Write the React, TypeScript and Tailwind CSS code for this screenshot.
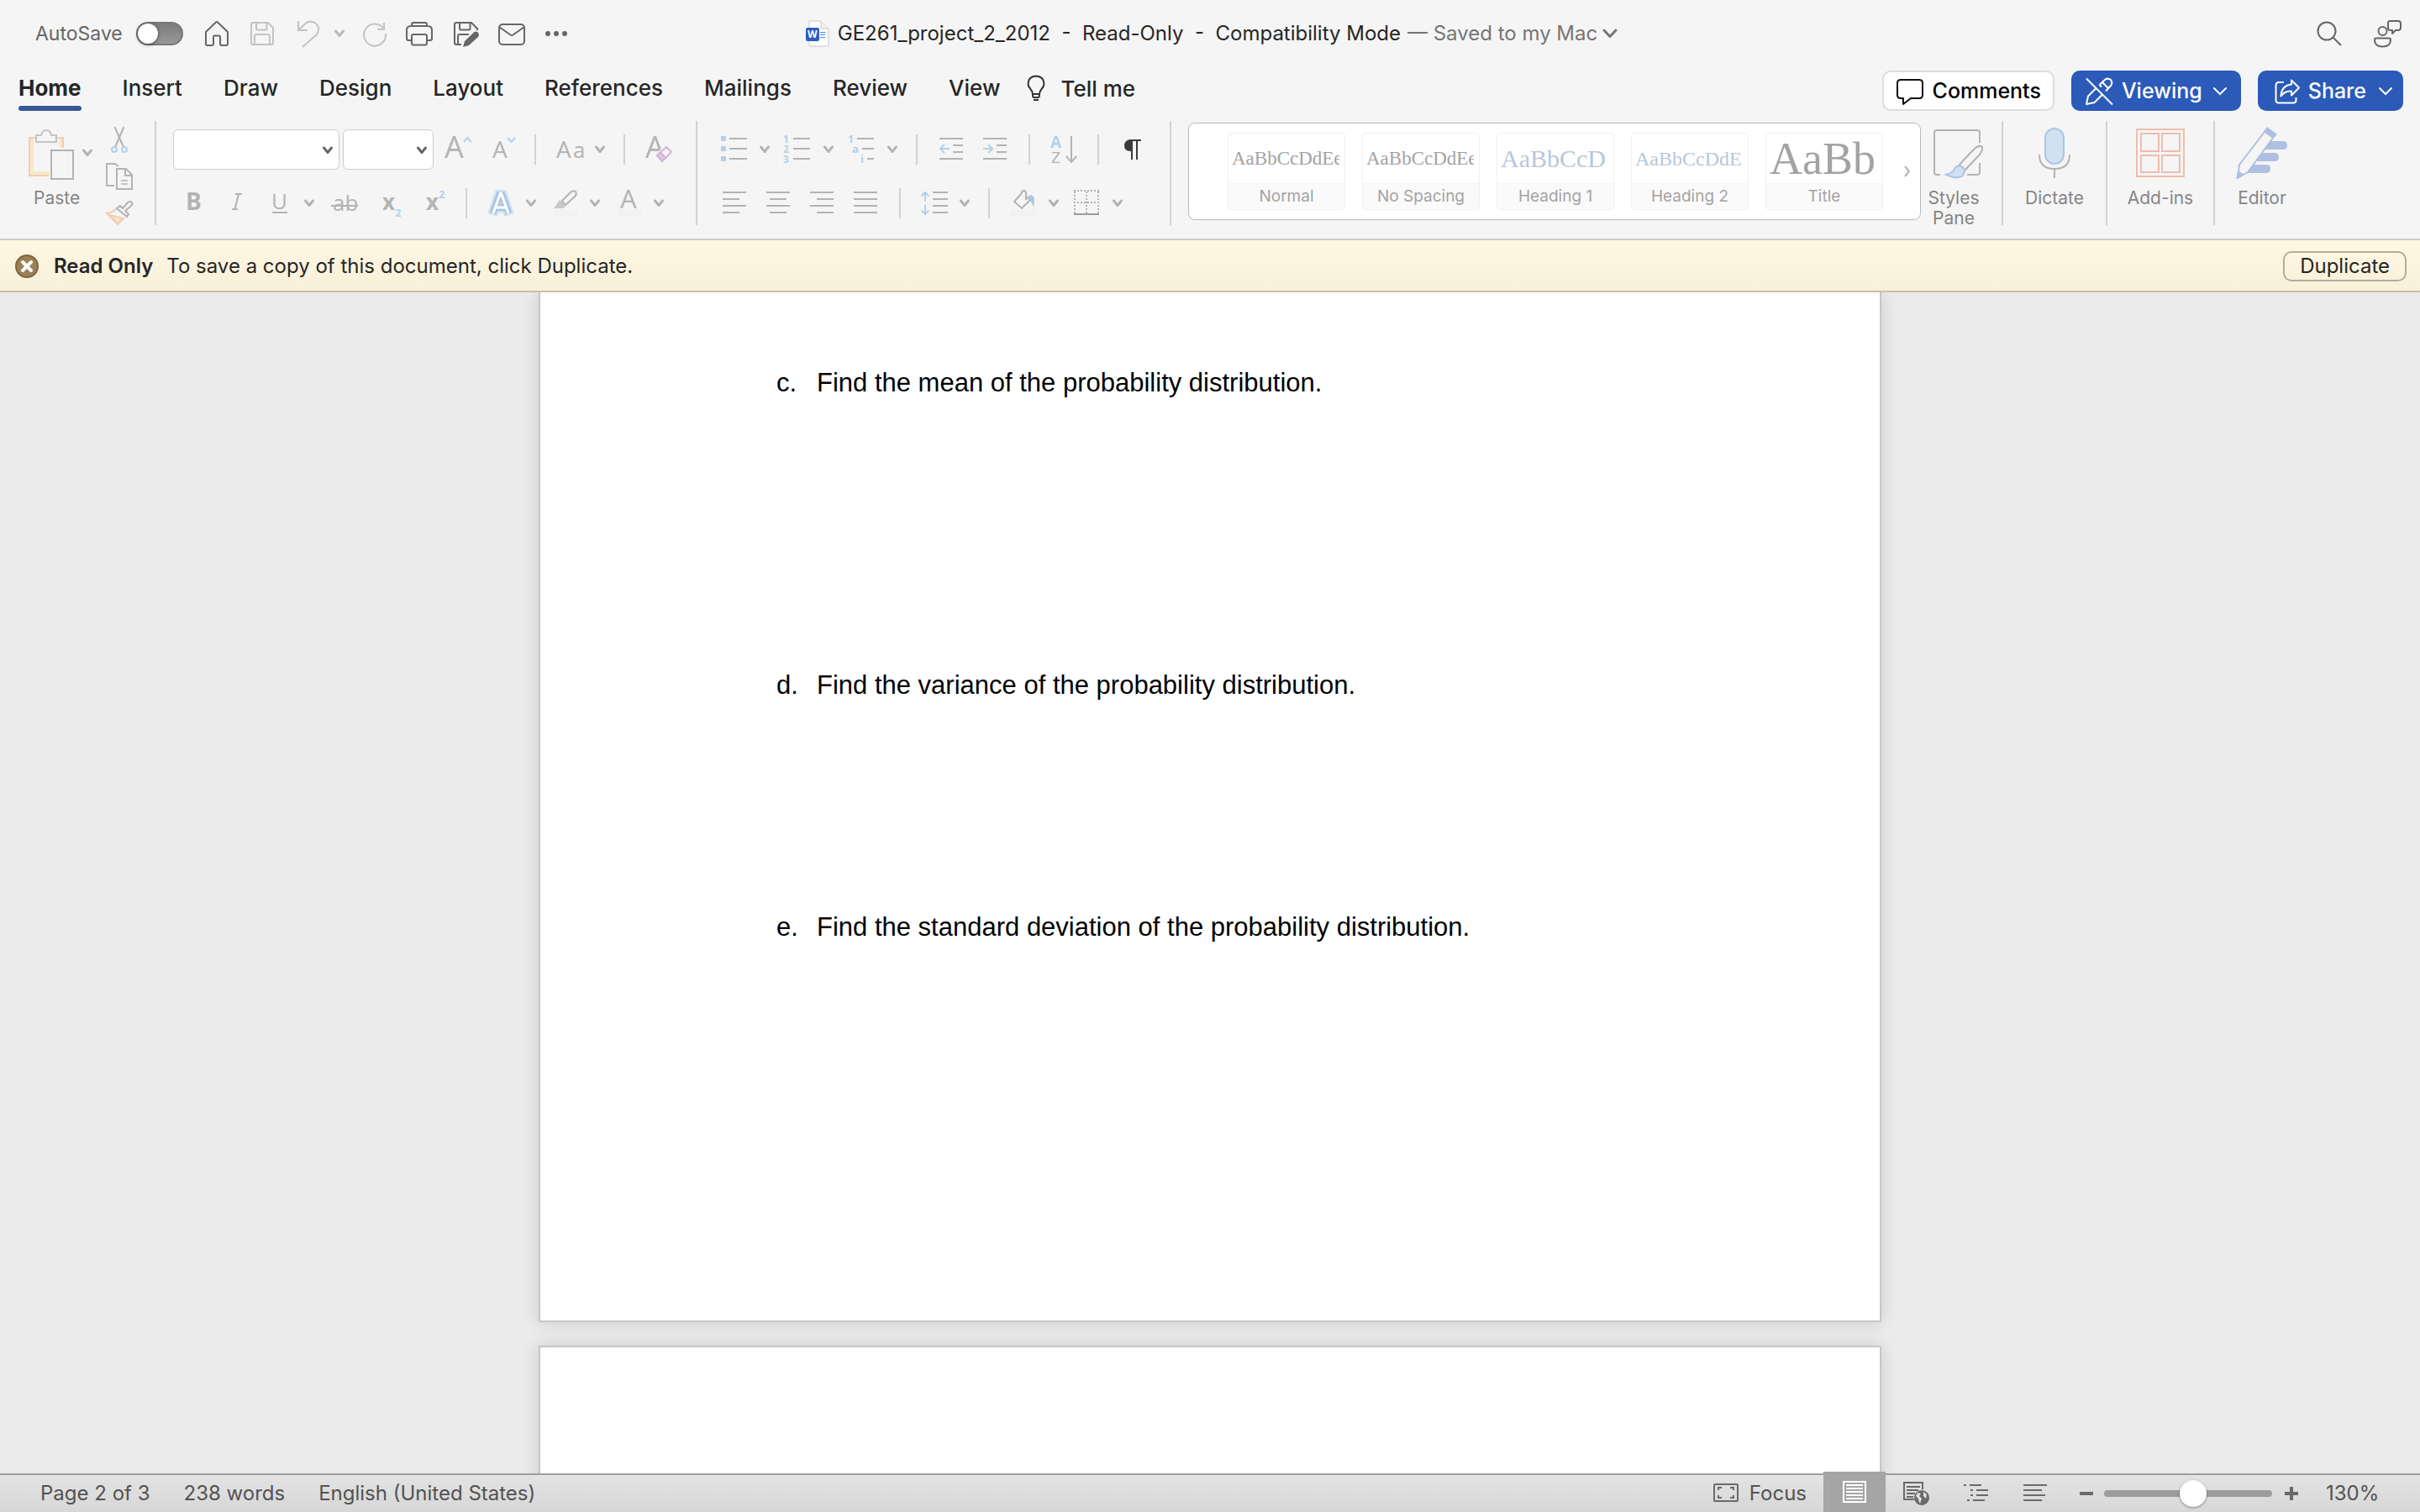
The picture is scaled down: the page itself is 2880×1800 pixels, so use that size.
import { useState } from 'react';
import type { ReactNode } from 'react';

const GRAY = '#b3b3b3';
const BLUE = '#b3d0ea';
const DARK = '#666666';

const TABS = ['Home', 'Insert', 'Draw', 'Design', 'Layout', 'References', 'Mailings', 'Review', 'View'];

const STYLES = [
  { name: 'Normal',     sample: 'AaBbCcDdEe', className: 'text-[23px] text-[#a3a3a3]' },
  { name: 'No Spacing', sample: 'AaBbCcDdEe', className: 'text-[23px] text-[#a3a3a3]' },
  { name: 'Heading 1',  sample: 'AaBbCcD',    className: 'text-[30px] text-[#b7c6dc]' },
  { name: 'Heading 2',  sample: 'AaBbCcDdE',  className: 'text-[24px] text-[#b7c6dc]' },
  { name: 'Title',      sample: 'AaBb',       className: 'text-[54px] text-[#a3a3a3]' },
];

const QUESTIONS = [
  { letter: 'c.', text: 'Find the mean of the probability distribution.',               className: 'mb-[324px]' },
  { letter: 'd.', text: 'Find the variance of the probability distribution.',           className: 'mb-[252px]' },
  { letter: 'e.', text: 'Find the standard deviation of the probability distribution.', className: '' },
];

interface IconProps {
  w: number;
  h: number;
  stroke?: string;
  sw?: number;
  children: ReactNode;
}

function Icon({ w, h, stroke = GRAY, sw = 2, children }: IconProps) {
  return (
    <svg
      width={w}
      height={h}
      viewBox={`0 0 ${w} ${h}`}
      fill="none"
      stroke={stroke}
      strokeWidth={sw}
      className="block flex-shrink-0 overflow-visible"
      aria-hidden="true"
    >
      {children}
    </svg>
  );
}

function Chevron({ color = GRAY, sw = 3 }: { color?: string; sw?: number }) {
  return (
    <Icon w={12} h={10} stroke={color} sw={sw}>
      <path d="M1.5 2 L6 7.5 L10.5 2" strokeLinecap="round" strokeLinejoin="round" />
    </Icon>
  );
}

/* Text glyph inside an icon */
function Glyph({ x, y, size, color = GRAY, bold, children }: {
  x: number; y: number; size: number; color?: string; bold?: boolean; children: string;
}) {
  return (
    <text
      x={x}
      y={y}
      fill={color}
      stroke="none"
      fontFamily='"Open Sans", sans-serif'
      fontSize={size}
      fontWeight={bold ? 700 : 400}
    >
      {children}
    </text>
  );
}

function Tool({ label, className = '', children }: { label: string; className?: string; children: ReactNode }) {
  return (
    <button type="button" aria-label={label} className={`flex flex-shrink-0 items-center ${className}`}>
      {children}
    </button>
  );
}

function Divider({ tall, className = '' }: { tall?: boolean; className?: string }) {
  return <span className={`w-0.5 flex-shrink-0 bg-[#d2d2d2] ${tall ? 'h-[124px]' : 'h-9'} ${className}`} />;
}

function ComboBox({ label, className }: { label: string; className: string }) {
  return (
    <div className={`relative h-12 flex-shrink-0 ${className}`}>
      <select aria-label={label} className="h-full w-full appearance-none rounded-md border border-[#cbcbcb] bg-white" />
      <span className="pointer-events-none absolute right-2 top-5">
        <Chevron color={DARK} />
      </span>
    </div>
  );
}

function BigTool({ label, className = '', children }: { label: string; className?: string; children: ReactNode }) {
  return (
    <button
      type="button"
      className={`flex flex-shrink-0 flex-col items-center pt-1.5 text-[21px] leading-6 text-[#858585] ${className}`}
    >
      {children}
      <span className="mt-2.5">{label}</span>
    </button>
  );
}

/* Horizontal strokes, each [x1, x2, y] */
function Lines({ rows }: { rows: number[][] }) {
  return <path d={rows.map(([a, b, y]) => `M${a} ${y}H${b}`).join('')} />;
}

function TitleBar() {
  const [autoSave, setAutoSave] = useState(false);

  return (
    <div className="flex h-20 items-center">
      <div className="flex flex-1 items-center">
        <label htmlFor="autosave" className="ml-[42px] text-[23px] text-[#666]">AutoSave</label>
        <span className="relative ml-4 h-7 w-14">
          <input
            id="autosave"
            type="checkbox"
            role="switch"
            checked={autoSave}
            onChange={(e) => setAutoSave(e.target.checked)}
            className="block h-7 w-14 appearance-none rounded-full border-2 border-[#777] bg-linear-to-b from-[#7c7c7c] to-[#989898]"
          />
          <span className={`pointer-events-none absolute top-0.5 size-6 rounded-full bg-white shadow-[0_1px_4px_rgba(0,0,0,0.5)] ${autoSave ? 'right-0.5' : 'left-0.5'}`} />
        </span>

        <Tool label="Home" className="ml-6">
          <Icon w={32} h={32} stroke={DARK}>
            <path d="M3 14 L15 2.5 Q16 1.5 17 2.5 L29 14 V28 Q29 30 27 30 H22 Q20 30 20 28 V20 Q20 18.5 18.5 18.5 H13.5 Q12 18.5 12 20 V28 Q12 30 10 30 H5 Q3 30 3 28 Z" strokeLinejoin="round" />
          </Icon>
        </Tool>
        <Tool label="Save" className="ml-[22px]">
          <Icon w={32} h={32} stroke="#c3c3c3">
            <path d="M5 3 H23 L29 9 V27 Q29 29 27 29 H5 Q3 29 3 27 V5 Q3 3 5 3 Z M9 3 V10 Q9 11.5 10.5 11.5 H20 Q21.5 11.5 21.5 10 V3 M7 29 V19 Q7 17 9 17 H23 Q25 17 25 19 V29" />
          </Icon>
        </Tool>
        <Tool label="Undo" className="ml-6">
          <Icon w={32} h={34} stroke="#c3c3c3">
            <path d="M3 2 V13 H14 M3 13 L12 4.5 Q18 0.5 24 5 Q30 11 25 18 L8 33" />
          </Icon>
        </Tool>
        <Tool label="Undo options" className="ml-3.5"><Chevron color="#b9b9b9" /></Tool>
        <Tool label="Redo" className="ml-5">
          <Icon w={32} h={32} stroke="#c3c3c3">
            <path d="M27 3 V11 H19 M27 10.5 A13 13 0 1 0 29 16" />
          </Icon>
        </Tool>
        <Tool label="Print" className="ml-5">
          <Icon w={34} h={32} stroke={DARK}>
            <path d="M8 7 V5 Q8 3 10 3 H24 Q26 3 26 5 V7 M7 24 H4 Q2 24 2 22 V12 Q2 7 7 7 H27 Q32 7 32 12 V22 Q32 24 30 24 H27" />
            <rect x="8" y="17" width="18" height="12.5" rx="2" />
          </Icon>
        </Tool>
        <Tool label="Save as" className="ml-[22px]">
          <Icon w={34} h={34} stroke={DARK}>
            <path d="M11 30 H5 Q3 30 3 28 V6 Q3 4 5 4 H23 L30 11 V13 M9 4 V11 Q9 12.5 10.5 12.5 H20 Q21.5 12.5 21.5 11 V4 M7 30 V20 Q7 18 9 18 H20" />
            <path d="M13 33 L15 26 L26 15.5 Q29 13.5 31 16 Q33 18.5 31 21 L20 31 Z" fill={DARK} stroke="none" />
          </Icon>
        </Tool>
        <Tool label="Mail" className="ml-5">
          <Icon w={34} h={32} stroke={DARK}>
            <rect x="2" y="5" width="30" height="24" rx="4" />
            <path d="M2 8 L15.5 17.5 Q17 18.5 18.5 17.5 L32 8" />
          </Icon>
        </Tool>
        <Tool label="More" className="ml-[22px]">
          <Icon w={28} h={8} stroke="none">
            <circle cx="4" cy="4" r="3" fill={DARK} />
            <circle cx="14" cy="4" r="3" fill={DARK} />
            <circle cx="24" cy="4" r="3" fill={DARK} />
          </Icon>
        </Tool>
      </div>

      <h1 className="flex items-center pl-1 text-[24px] text-[#262626]">
        <Icon w={28} h={34} stroke="#c8c8c8" sw={1}>
          <path d="M4 2 H18 L27 11 V31 Q27 32 26 32 H5 Q4 32 4 31 Z" fill="#fff" />
          <path d="M18 2 V10 Q18 11 19 11 H27" fill="#f0f0f0" />
          <path d="M17 15.5 H23 M17 18.5 H23 M17 21.5 H23" stroke="#3f8be0" />
          <rect x="0" y="10" width="16" height="16" rx="2" fill="#2b5cc0" stroke="none" />
          <Glyph x={2} y={22} size={12} color="#fff" bold>W</Glyph>
        </Icon>
        <span className="ml-2.5 whitespace-pre">GE261_project_2_2012  -  Read-Only  -  Compatibility Mode</span>
        <button type="button" className="flex items-center gap-1.5 pl-2 text-[#757575]">
          <span>— Saved to my Mac</span>
          <Icon w={18} h={12} stroke="#757575" sw={3}>
            <path d="M2 2 L9 9.5 L16 2" strokeLinecap="round" strokeLinejoin="round" />
          </Icon>
        </button>
      </h1>

      <div className="flex flex-1 items-center justify-end gap-9">
        <Tool label="Search">
          <Icon w={32} h={32} stroke={DARK}>
            <circle cx="13" cy="13" r="10.5" />
            <path d="M20.5 20.5 L30 30" />
          </Icon>
        </Tool>
        <Tool label="Presence" className="mr-[22px]">
          <Icon w={34} h={34} stroke={DARK}>
            <circle cx="11.5" cy="14" r="5" />
            <path d="M4 22.5 H19 Q21 22.5 21 24.5 Q21 32.5 11.5 32.5 Q2 32.5 2 24.5 Q2 22.5 4 22.5 Z" />
            <path d="M20 2 H30 Q33 2 33 5 V10 Q33 13 30 13 H27 L23 17 V13 H20.5 Q18 13 18 10 V5 Q18 2 20 2 Z" strokeLinejoin="round" />
          </Icon>
        </Tool>
      </div>
    </div>
  );
}

function TabRow() {
  const [active, setActive] = useState('Home');

  return (
    <div className="flex pl-[22px] pr-5 pt-1">
      <nav className="flex gap-[49px]">
        {TABS.map((tab) => (
          <button
            key={tab}
            type="button"
            onClick={() => setActive(tab)}
            className={`flex h-12 flex-col justify-between text-[26px] leading-[42px] text-[#262626] ${tab === active ? 'font-bold' : 'font-medium'}`}
          >
            {tab}
            {tab === active && <span className="h-1.5 w-full rounded-full bg-[#3a5796]" />}
          </button>
        ))}
      </nav>
      <button type="button" className="ml-8 flex h-[42px] items-center gap-[18px] text-[26px] font-medium text-[#262626]">
        <Icon w={22} h={32} stroke="#333">
          <path d="M7 23 Q6.5 19 4 16.5 Q1.5 13.5 1.5 10.5 Q2 2 11 1.5 Q20 2 20.5 10.5 Q20.5 13.5 18 16.5 Q15.5 19 15 23 Z M7 23 V25 Q7 27 9 27 H13 Q15 27 15 25 V23" />
          <path d="M8 30 H14" />
        </Icon>
        Tell me
      </button>

      <div className="ml-auto flex gap-5 text-[25px] font-medium">
        <button type="button" className="flex h-12 items-center gap-2.5 rounded-[10px] border-2 border-[#dcdcdc] bg-white px-3.5 pt-0.5 text-black">
          <Icon w={34} h={34} stroke="#111">
            <path d="M6 3 H28 Q32 3 32 7 V21 Q32 25 28 25 H18 L9 32 V25 H6 Q2 25 2 21 V7 Q2 3 6 3 Z" strokeLinejoin="round" />
          </Icon>
          Comments
        </button>
        <button type="button" className="flex h-12 items-center rounded-[10px] bg-[#2b5ab9] px-4 pt-0.5 text-white">
          <Icon w={34} h={34} stroke="#fff">
            <path d="M2 1.5 L33 32.5" />
            <path d="M13.5 13 L4 22.5 L2 32 L11.5 30 L21 20.5 M17.5 9 L24.5 2.5 Q27.5 0.5 31 3 Q33.5 6.5 31 10 L25 16.5 M21 6 L28 13 M17.5 9 L20 11.5" strokeLinejoin="round" />
          </Icon>
          <span className="ml-2.5 mr-3">Viewing</span>
          <Icon w={18} h={12} stroke="#fff"><path d="M2 2 L9 9 L16 2" strokeLinecap="round" /></Icon>
        </button>
        <button type="button" className="flex h-12 items-center rounded-[10px] bg-[#2b5ab9] pl-5 pr-3 pt-0.5 text-white">
          <Icon w={30} h={32} stroke="#fff">
            <path d="M11 5 H5 Q1.5 5 1.5 9 V26 Q1.5 29.5 5 29.5 H22 Q25.5 29.5 25.5 26 V23" />
            <path d="M20 2.5 L29 11.5 L20 20.5 V15.5 Q12 15 7.5 21.5 Q8 9 20 7.5 Z" strokeLinejoin="round" />
          </Icon>
          <span className="ml-2.5 mr-3.5">Share</span>
          <Icon w={18} h={12} stroke="#fff"><path d="M2 2 L9 9 L16 2" strokeLinecap="round" /></Icon>
        </button>
      </div>
    </div>
  );
}

function ClipboardGroup() {
  return (
    <div className="flex">
      <button type="button" className="ml-8 flex flex-col items-start pt-1.5 text-[21px] leading-6 text-[#858585]">
        <span className="flex items-center">
          <Icon w={58} h={64}>
            <path d="M10 14 H3 V59 H26 M36 14 H43 V26" stroke="#f3cdb2" />
            <path d="M6 15 V56 H26 M40 15 V26" stroke="#f6e9c9" strokeWidth={4} />
            <path d="M11 11 H17 Q18 5 23 5 Q28 5 29 11 H35 V19 H11 Z" stroke="#c4c4c4" fill="#f5f5f5" />
            <rect x="29" y="29" width="26" height="34" />
          </Icon>
          <span className="ml-2"><Chevron /></span>
        </span>
        <span className="ml-2 mt-2.5">Paste</span>
      </button>
      <div className="ml-4 flex flex-col gap-3 pt-1.5">
        <Tool label="Cut">
          <Icon w={32} h={32}>
            <path d="M10.5 1 L21 25 M21.5 1 L11 25" />
            <circle cx="10" cy="28" r="3" stroke={BLUE} />
            <circle cx="22" cy="28" r="3" stroke={BLUE} />
          </Icon>
        </Tool>
        <Tool label="Copy">
          <Icon w={32} h={32}>
            <path d="M10 27 H1 V1 H11 L15 4 M13 7 H24 L31 14 V31 H13 Z M23 7 V15 H31" />
            <path d="M18 21 H26 M18 25 H26" stroke="#c4c4c4" />
          </Icon>
        </Tool>
        <Tool label="Format painter">
          <Icon w={32} h={32}>
            <path d="M13 10 Q8 15 1 16 L14 29 L22 21" stroke="#f3cdb2" />
            <path d="M5 18 L14 28 L20 22 Z" fill="#f6e9c9" stroke="#f3cdb2" />
            <path d="M13 10 L17 7 L20 10 L26 3 Q29 1 31 3 Q32 5 30 7 L23 13 L27 17 L25 20 Z" fill="#f5f5f5" />
          </Icon>
        </Tool>
      </div>
    </div>
  );
}

function FontGroup() {
  return (
    <div className="pl-5 pt-2.5">
      <div className="flex h-12 items-center">
        <ComboBox label="Font" className="w-[198px]" />
        <ComboBox label="Font size" className="ml-1 w-[108px]" />
        <Tool label="Increase font size" className="ml-3">
          <Icon w={34} h={36}>
            <Glyph x={1} y={28} size={36}>A</Glyph>
            <path d="M24 9 L28.5 4 L33 9" stroke={BLUE} />
          </Icon>
        </Tool>
        <Tool label="Decrease font size" className="ml-[22px]">
          <Icon w={34} h={36}>
            <Glyph x={2} y={28} size={28}>A</Glyph>
            <path d="M20 4 L24.5 9 L29 4" stroke={BLUE} />
          </Icon>
        </Tool>
        <Divider className="ml-[18px]" />
        <Tool label="Change case" className="ml-6">
          <Icon w={34} h={36}>
            <Glyph x={0} y={28} size={28}>A</Glyph>
            <Glyph x={20} y={28} size={26}>a</Glyph>
          </Icon>
          <span className="ml-3"><Chevron /></span>
        </Tool>
        <Divider className="ml-[22px]" />
        <Tool label="Clear formatting" className="ml-6">
          <Icon w={34} h={36}>
            <Glyph x={0} y={28} size={36}>A</Glyph>
            <path d="M13 25 L25 13 L33 21 L21 33 Z" fill="#f5f5f5" stroke="#f5f5f5" strokeWidth={3} />
            <path d="M14 25 L25 15 L31 21 L20 32 Z" stroke="#d3b3dc" />
            <path d="M14 25 L18 21 L24 28 L20 32 Z" stroke="#d3b3dc" fill="#e0c8e6" />
          </Icon>
        </Tool>
      </div>

      <div className="mt-[22px] flex h-9 items-center">
        <Tool label="Bold" className="ml-4">
          <Icon w={20} h={36}><Glyph x={-1} y={26} size={28} bold>B</Glyph></Icon>
        </Tool>
        <Tool label="Italic" className="ml-8">
          <Icon w={16} h={36}><path d="M6 7 H14 M2 25 H9 M10 7 L5.5 25" /></Icon>
        </Tool>
        <Tool label="Underline" className="ml-8">
          <Icon w={20} h={36}>
            <Glyph x={1} y={25} size={26}>U</Glyph>
            <path d="M2 29 H20" />
          </Icon>
          <span className="ml-5"><Chevron /></span>
        </Tool>
        <Tool label="Strikethrough" className="ml-5">
          <Icon w={32} h={36}>
            <Glyph x={2} y={27} size={26}>ab</Glyph>
            <path d="M0 21 H32" />
          </Icon>
        </Tool>
        <Tool label="Subscript" className="ml-7">
          <Icon w={26} h={36}>
            <Glyph x={1} y={26} size={26} bold>x</Glyph>
            <Glyph x={16} y={34} size={13} color={BLUE} bold>2</Glyph>
          </Icon>
        </Tool>
        <Tool label="Superscript" className="ml-[26px]">
          <Icon w={26} h={36}>
            <Glyph x={1} y={26} size={26} bold>x</Glyph>
            <Glyph x={16} y={12} size={13} color={BLUE} bold>2</Glyph>
          </Icon>
        </Tool>
        <Divider className="ml-[22px]" />
        <Tool label="Text effects" className="ml-6">
          <Icon w={32} h={36}>
            <path d="M6 32 L14 8 H18 L26 32 M10 23 H22" stroke="#d0e1f1" strokeWidth={12} />
            <path d="M6.5 30 L14.5 8 H17.5 L25.5 30 M10 23 H22" stroke="#aac4e4" strokeWidth={8} />
            <path d="M7 30 L15.5 6 H16.5 L25 30 M10 23 H22" stroke="#fff" strokeWidth={3} />
          </Icon>
          <span className="ml-3.5"><Chevron /></span>
        </Tool>
        <Tool label="Highlight" className="ml-5">
          <Icon w={30} h={36}>
            <path d="M11 15 L21 5 Q24 2 27 4 Q29 7 26 10 L15 20 Z" />
            <path d="M1 24 L8 14 L16 21 L12 24 Z" fill="#c9c9c9" stroke="none" />
            <rect x="0" y="26" width="30" height="8" fill="#f2f2f2" stroke="none" />
          </Icon>
          <span className="ml-3.5"><Chevron /></span>
        </Tool>
        <Tool label="Font color" className="ml-5">
          <Icon w={30} h={36}>
            <Glyph x={4} y={24} size={31}>A</Glyph>
            <rect x="0" y="26" width="30" height="8" fill="#f2f2f2" stroke="none" />
          </Icon>
          <span className="ml-3.5"><Chevron /></span>
        </Tool>
      </div>
    </div>
  );
}

function ParagraphGroup() {
  return (
    <div className="pl-7 pt-2.5">
      <div className="flex h-12 items-center">
        <Tool label="Bullets">
          <Icon w={32} h={36}>
            <path d="M3 2V8 M3 14V20 M3 26V32" stroke={BLUE} strokeWidth={6} />
            <Lines rows={[[10, 31, 5], [10, 31, 17], [10, 31, 29]]} />
          </Icon>
          <span className="ml-3.5"><Chevron /></span>
        </Tool>
        <Tool label="Numbering" className="ml-4">
          <Icon w={32} h={36}>
            <Glyph x={0} y={10} size={12} color={BLUE} bold>1</Glyph>
            <Glyph x={0} y={22} size={12} color={BLUE} bold>2</Glyph>
            <Glyph x={0} y={34} size={12} color={BLUE} bold>3</Glyph>
            <Lines rows={[[12, 32, 5], [12, 32, 17], [12, 32, 29]]} />
          </Icon>
          <span className="ml-4"><Chevron /></span>
        </Tool>
        <Tool label="Multilevel list" className="ml-4">
          <Icon w={32} h={36}>
            <Glyph x={1} y={10} size={12} color={BLUE} bold>1</Glyph>
            <Glyph x={6} y={22} size={13} color={BLUE} bold>a</Glyph>
            <Glyph x={16} y={34} size={13} color={BLUE} bold>i</Glyph>
            <Lines rows={[[12, 32, 5], [18, 32, 17], [24, 32, 29]]} />
          </Icon>
          <span className="ml-4"><Chevron /></span>
        </Tool>
        <Divider className="ml-[22px]" />
        <Tool label="Decrease indent" className="ml-[26px]">
          <Icon w={28} h={36}>
            <Lines rows={[[0, 28, 5], [16, 28, 13], [16, 28, 21], [0, 28, 29]]} />
            <path d="M12 17 H1 M6 12 L1 17 L6 22" stroke={BLUE} />
          </Icon>
        </Tool>
        <Tool label="Increase indent" className="ml-6">
          <Icon w={28} h={36}>
            <Lines rows={[[0, 28, 5], [16, 28, 13], [16, 28, 21], [0, 28, 29]]} />
            <path d="M0 17 H11 M6 12 L11 17 L6 22" stroke={BLUE} />
          </Icon>
        </Tool>
        <Divider className="ml-[26px]" />
        <Tool label="Sort" className="ml-6">
          <Icon w={34} h={36}>
            <Glyph x={0} y={16} size={19} color={BLUE} bold>A</Glyph>
            <Glyph x={1} y={34} size={19}>Z</Glyph>
            <path d="M25 2 V33 M19 26 L25 33 L31 26" />
          </Icon>
        </Tool>
        <Divider className="ml-[22px]" />
        <Tool label="Show formatting marks" className="ml-7">
          <Icon w={24} h={36} stroke="#3c3c3c">
            <path d="M9 7 H22 M11 7 V30 M17 7 V30" />
            <path d="M11 6 H9 Q2 7 2 13.5 Q2 20 9 20 H11 Z" fill="#3c3c3c" stroke="none" />
          </Icon>
        </Tool>
      </div>

      <div className="mt-[22px] flex h-9 items-center">
        <Tool label="Align left" className="ml-0.5">
          <Icon w={28} h={36}><Lines rows={[[0, 28, 5], [0, 20, 13], [0, 28, 21], [0, 20, 29]]} /></Icon>
        </Tool>
        <Tool label="Center" className="ml-6">
          <Icon w={28} h={36}><Lines rows={[[0, 28, 5], [4, 24, 13], [0, 28, 21], [4, 24, 29]]} /></Icon>
        </Tool>
        <Tool label="Align right" className="ml-6">
          <Icon w={28} h={36}><Lines rows={[[0, 28, 5], [8, 28, 13], [0, 28, 21], [8, 28, 29]]} /></Icon>
        </Tool>
        <Tool label="Justify" className="ml-6">
          <Icon w={28} h={36}><Lines rows={[[0, 28, 5], [0, 28, 13], [0, 28, 21], [0, 28, 29]]} /></Icon>
        </Tool>
        <Divider className="ml-[26px]" />
        <Tool label="Line spacing" className="ml-6">
          <Icon w={32} h={36}>
            <path d="M5 16 V5 M0.5 9.5 L5 5 L9.5 9.5 M5 20 V31 M0.5 26.5 L5 31 L9.5 26.5" stroke={BLUE} />
            <Lines rows={[[14, 32, 5], [14, 32, 13], [14, 32, 21], [14, 32, 29]]} />
          </Icon>
          <span className="ml-3.5"><Chevron /></span>
        </Tool>
        <Divider className="ml-[22px]" />
        <Tool label="Shading" className="ml-6">
          <Icon w={32} h={36}>
            <path d="M14 6 L5 16 L14 24 L24 14 L19 10 M19 14 V6 Q19 3 16.5 3 Q14 3 14 6" />
            <path d="M22 9 Q28 6 29 14 L28 23 Q26 16 22 13 Z" fill="#adc5e2" stroke="none" />
            <rect x="0" y="26" width="32" height="8" fill="#f2f2f2" stroke="none" />
          </Icon>
          <span className="ml-3.5"><Chevron /></span>
        </Tool>
        <Tool label="Borders" className="ml-4">
          <Icon w={32} h={36}>
            <path d="M2 3 H32 M2 17 H32" strokeDasharray="2 2" />
            <path d="M3 4 V30 M17 4 V30 M31 4 V30" strokeDasharray="2 2" />
            <path d="M2 31 H32" stroke="#9c9c9c" />
          </Icon>
          <span className="ml-4"><Chevron /></span>
        </Tool>
      </div>
    </div>
  );
}

function StyleGallery() {
  return (
    <div className="ml-5 mt-0.5 flex h-[116px] w-[872px] flex-shrink-0 items-center rounded-lg border border-[#b9b9b9] bg-white pl-[46px]">
      <div className="flex gap-5">
        {STYLES.map((s) => (
          <button
            key={s.name}
            type="button"
            className="flex h-[92px] w-[140px] flex-col overflow-hidden rounded border border-[#f0f0f0]"
          >
            <span className={`mx-1 flex h-[60px] w-[128px] items-center overflow-hidden font-["Liberation_Serif",serif] leading-[60px] ${s.className}`}>
              {s.sample}
            </span>
            <span className="w-full border-t border-[#f5f5f5] bg-[#fafafa] text-center text-[19px] leading-[30px] text-[#a3a3a3]">
              {s.name}
            </span>
          </button>
        ))}
      </div>
      <Tool label="More styles" className="ml-6">
        <Icon w={10} h={16} stroke={GRAY}><path d="M2 2 L7 8 L2 14" /></Icon>
      </Tool>
    </div>
  );
}

function Ribbon() {
  return (
    <div className="mt-3 flex items-start pb-3">
      <ClipboardGroup />
      <Divider tall className="ml-[26px]" />
      <FontGroup />
      <Divider tall className="ml-[26px]" />
      <ParagraphGroup />
      <Divider tall className="ml-8" />
      <StyleGallery />
      <BigTool label="Styles Pane" className="ml-1 w-[70px]">
        <Icon w={64} h={64}>
          <path d="M16 58 H12 Q9 58 9 55 V8 Q9 5 12 5 H60 Q63 5 63 8 V20 M63 44 V55 Q63 58 60 58 H48" />
          <path d="M38 48 Q39 45 57 27 Q62 22 66 25 Q67 28 63 34 L45 53" />
          <path d="M23 58 Q31 56 33 51 Q36 46 41 48 Q47 51 44 57 Q40 65 23 58 Z" fill="#d0e1f1" stroke="#adc5e2" />
        </Icon>
      </BigTool>
      <Divider tall className="ml-[22px]" />
      <BigTool label="Dictate" className="w-[122px]">
        <Icon w={40} h={64}>
          <rect x="9" y="3" width="22" height="42" rx="11" fill="#d0e1f1" stroke="#adc5e2" />
          <path d="M2 34 Q2 51 20 51 Q38 51 38 34 M20 51 V62" />
        </Icon>
      </BigTool>
      <Divider tall />
      <BigTool label="Add-ins" className="w-[126px]">
        <Icon w={60} h={64} stroke="#f0bcae">
          <rect x="2" y="4" width="56" height="56" />
          <rect x="7" y="9" width="21" height="21" />
          <rect x="32" y="9" width="21" height="21" />
          <rect x="7" y="35" width="21" height="20" />
          <rect x="32" y="35" width="21" height="20" />
        </Icon>
      </BigTool>
      <Divider tall />
      <BigTool label="Editor" className="w-[112px]">
        <Icon w={64} h={64} stroke="none">
          <path d="M34 18 H57 Q62 18 62 23 Q62 28 57 28 H28 Z M28 32 H47 Q52 32 52 37 Q52 42 47 42 H20 Z M20 46 H37 Q42 46 42 51 Q42 56 37 56 H10 Z" fill="#afbfe2" />
          <path d="M38 3 L48 10 L15 55 L3 62 L5 46 Z" fill="#f5f5f5" stroke="#afbfe2" strokeWidth={2} strokeLinejoin="round" />
          <path d="M38 1 L50 10 L45 15 L34 7 Z M1 63 L3 53 L11 58 Z" fill="#afbfe2" />
        </Icon>
      </BigTool>
    </div>
  );
}

function ReadOnlyBar() {
  return (
    <div className="flex h-16 flex-shrink-0 items-center border-y-2 border-t-[#cbcbcb] border-b-[#c5c0ad] bg-linear-to-b from-[#fff7e2] to-[#f9f0da] pl-[18px] pr-4 pt-0.5 text-[24px] text-[#262626]">
      <Tool label="Dismiss">
        <Icon w={28} h={28} stroke="#fff" sw={4}>
          <circle cx="14" cy="14" r="13" fill="#9c8058" stroke="#7d6540" strokeWidth={2} />
          <path d="M9 9 L19 19 M19 9 L9 19" strokeLinecap="round" />
        </Icon>
      </Tool>
      <strong className="ml-[18px] font-semibold">Read Only</strong>
      <p className="ml-4">To save a copy of this document, click Duplicate.</p>
      <button type="button" className="ml-auto h-9 rounded-[10px] border-2 border-[#b3ac9c] px-[18px] leading-8">
        Duplicate
      </button>
    </div>
  );
}

function Document() {
  return (
    <main className="min-h-0 flex-1 overflow-hidden bg-[#ebebeb]">
      <article className='mx-auto h-[1226px] w-[1598px] border-2 border-t-0 border-[#c6c6c6] bg-white pl-[281px] pt-[90px] font-["Liberation_Sans",sans-serif] text-[31px] leading-9 text-black shadow-[0_0_20px_rgba(0,0,0,0.14)]'>
        {QUESTIONS.map((q) => (
          <p key={q.letter} className={`flex ${q.className}`}>
            <span className="w-12">{q.letter}</span>
            <span>{q.text}</span>
          </p>
        ))}
      </article>
      <article className="mx-auto mt-7 h-[1226px] w-[1598px] border-2 border-[#c6c6c6] bg-white shadow-[0_0_20px_rgba(0,0,0,0.14)]" />
    </main>
  );
}

function StatusBar() {
  const [zoom, setZoom] = useState(130);

  return (
    <footer className="flex h-[46px] flex-shrink-0 items-center border-t-2 border-[#9d9d9d] bg-linear-to-b from-[#e3e3e3] to-[#d7d7d7] pl-12 text-[24px] text-[#525252]">
      <span>Page 2 of 3</span>
      <span className="ml-10">238 words</span>
      <span className="ml-10">English (United States)</span>

      <button type="button" className="ml-auto flex items-center gap-3">
        <Icon w={32} h={26} stroke="#6a6a6a">
          <rect x="2" y="2" width="28" height="20" rx="1" />
          <path d="M7 9 V6 H11 M21 6 H25 V9 M7 15 V18 H11 M21 18 H25 V15" />
        </Icon>
        Focus
      </button>
      <Tool label="Print layout" className="-mt-1 ml-5 h-12 w-[74px] justify-center bg-[#a5a5a5]">
        <Icon w={30} h={28} stroke="#fff">
          <path d="M2 2 H28 V26 H2 Z M5 6 H25 M5 10 H25 M5 14 H25 M5 18 H25 M5 22 H25" />
        </Icon>
      </Tool>
      <Tool label="Web layout" className="ml-5">
        <Icon w={34} h={30} stroke="#6a6a6a">
          <path d="M14 22 H2 V2 H24 V10 M5 7 H21 M5 11 H19 M5 15 H15 M5 19 H13" />
          <circle cx="23" cy="20" r="9" fill="#6a6a6a" stroke="none" />
          <path d="M18 14 L22 15 L20 18 L23 21 L21 27 Q19 24 19 21 L16 18 Z M25 13 L29 16 L28 21 L25 18 Z" fill="#e0e0e0" stroke="none" />
        </Icon>
      </Tool>
      <Tool label="Outline" className="ml-[38px]">
        <Icon w={32} h={26} stroke="#6a6a6a">
          <Lines rows={[[1, 4, 3], [8, 22, 3], [9, 12, 9], [16, 30, 9], [9, 12, 15], [16, 30, 15], [5, 8, 21], [12, 26, 21]]} />
        </Icon>
      </Tool>
      <Tool label="Draft" className="ml-10">
        <Icon w={28} h={26} stroke="#6a6a6a">
          <Lines rows={[[0, 28, 3], [0, 22, 9], [0, 26, 15], [0, 22, 21]]} />
        </Icon>
      </Tool>
      <Tool label="Zoom out" className="ml-[38px]">
        <Icon w={18} h={18} stroke="#6a6a6a" sw={4}><path d="M1 9 H17" /></Icon>
      </Tool>
      <input
        type="range"
        aria-label="Zoom"
        min={10}
        max={234}
        value={zoom}
        onChange={(e) => setZoom(Number(e.target.value))}
        className="ml-3 h-2 w-[200px] appearance-none rounded-full bg-[#9c9c9c] [&::-webkit-slider-thumb]:size-8 [&::-webkit-slider-thumb]:appearance-none [&::-webkit-slider-thumb]:rounded-full [&::-webkit-slider-thumb]:bg-white [&::-webkit-slider-thumb]:shadow-[0_1px_3px_rgba(0,0,0,0.4)]"
      />
      <Tool label="Zoom in" className="ml-3.5">
        <Icon w={18} h={18} stroke="#6a6a6a" sw={4}><path d="M1 9 H17 M9 1 V17" /></Icon>
      </Tool>
      <span className="ml-8 w-[112px]">{zoom}%</span>
    </footer>
  );
}

export default function App() {
  return (
    <div className='flex h-screen flex-col overflow-hidden bg-[#f5f5f5] font-["Inter",sans-serif]'>
      <header className="flex-shrink-0">
        <TitleBar />
        <TabRow />
        <Ribbon />
      </header>
      <ReadOnlyBar />
      <Document />
      <StatusBar />
    </div>
  );
}
